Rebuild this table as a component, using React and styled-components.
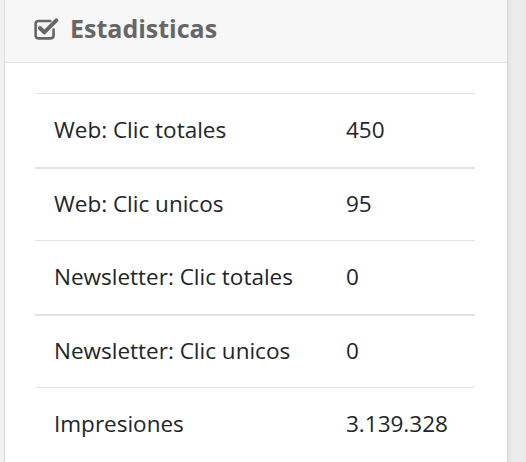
import React from "react";
import styled, { createGlobalStyle } from "styled-components";

const GlobalStyle = createGlobalStyle`
  html, body {
    margin: 0;
    padding: 0;
    background: #ebebeb;
  }
  body {
    font-family: "Open Sans", "Noto Sans", sans-serif;
  }
`;

const Page = styled.div`
  display: flex;
  height: 462px;
  overflow: hidden;
`;

const LeftGutter = styled.div`
  width: 4px;
  background: #f1f1f1;
`;

const RightGutter = styled.div`
  flex: 1;
  background: linear-gradient(to right, #e4e4e4, #ececec 30%, #eaeaea);
`;

const Panel = styled.div`
  width: 502px;
  background: #ffffff;
  border-left: 1px solid #dcdcdc;
  border-right: 1px solid #d8d8d8;
  display: flex;
  flex-direction: column;
`;

const PanelHeader = styled.div`
  height: 63px;
  box-sizing: border-box;
  background: #f7f7f7;
  border-bottom: 1px solid #e3e3e3;
  display: flex;
  align-items: center;
  gap: 11px;
  padding: 0 0 6px 29px;
`;

const Title = styled.h3`
  margin: 0;
  font-size: 25px;
  font-weight: 700;
  color: #666666;
`;

const PanelBody = styled.div`
  padding: 30px 32px 0 30px;
`;

const Table = styled.div`
  display: flex;
  flex-direction: column;
`;

const Row = styled.div`
  display: grid;
  grid-template-columns: 292px 1fr;
  align-items: center;
  height: 73.5px;
  box-sizing: border-box;
  border-top: ${({ $thick }) => ($thick ? 2 : 1)}px solid #dfe2e6;
  padding: 0 19px 1px;
  font-size: 22.5px;
  color: #212529;
`;

const Label = styled.span``;
const Value = styled.span``;

const IconBox = styled.svg`
  flex: none;
  width: 25px;
  height: 24px;
`;

const CheckIcon = () => (
  <IconBox viewBox="0 0 23 22">
    <path
      d="M18 12.5v5.5a2.5 2.5 0 0 1-2.5 2.5H4a2.5 2.5 0 0 1-2.5-2.5V7A2.5 2.5 0 0 1 4 4.5h11"
      fill="none"
      stroke="#666"
      strokeWidth="2.4"
      strokeLinecap="round"
    />
    <path
      d="M5.5 11l4 4L20.5 4"
      fill="none"
      stroke="#666"
      strokeWidth="3.6"
      strokeLinecap="round"
      strokeLinejoin="round"
    />
  </IconBox>
);

const stats = [
  { label: "Web: Clic totales", value: "450" },
  { label: "Web: Clic unicos", value: "95", thick: true },
  { label: "Newsletter: Clic totales", value: "0" },
  { label: "Newsletter: Clic unicos", value: "0", thick: true },
  { label: "Impresiones", value: "3.139.328" },
];

const App = () => {
  return (
    <>
      <GlobalStyle />
      <Page>
        <LeftGutter />
        <Panel>
          <PanelHeader>
            <CheckIcon />
            <Title>Estadisticas</Title>
          </PanelHeader>
          <PanelBody>
            <Table>
              {stats.map((s) => (
                <Row key={s.label} $thick={s.thick}>
                  <Label>{s.label}</Label>
                  <Value>{s.value}</Value>
                </Row>
              ))}
            </Table>
          </PanelBody>
        </Panel>
        <RightGutter />
      </Page>
    </>
  );
};

export default App;
